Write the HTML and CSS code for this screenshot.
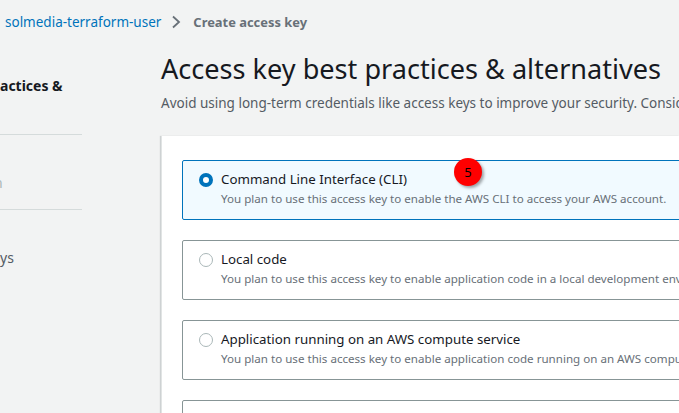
FILE: index.html
```html
<!DOCTYPE html>
<html>
<head>
<meta charset="utf-8">
<link rel="stylesheet" href="styles.css">
</head>
<body>
<div class="page">
  <nav class="crumbs">
    <a class="crumb-link">solmedia-terraform-user</a>
    <svg class="chev" width="10" height="14" viewBox="0 0 10 14"><path d="M2 1.5 L8 7 L2 12.5" fill="none" stroke="#687078" stroke-width="1.8"/></svg>
    <span class="crumb-cur">Create access key</span>
  </nav>
  <div class="layout">
    <aside class="side">
      <div class="step step-active"><span class="clip">actices &amp;</span></div>
      <div class="step step-muted"><span class="clip-n">n</span></div>
      <div class="step step-last"><span class="clip">ys</span></div>
    </aside>
    <main class="main">
      <h1 class="title">Access key best practices &amp; alternatives</h1>
      <p class="sub">Avoid using long-term credentials like access keys to improve your security. Consider the following use cases and alternatives.</p>
      <section class="panel">
        <div class="tile tile-selected">
          <span class="radio radio-on"></span>
          <div class="tile-text">
            <div class="tile-title">Command Line Interface (CLI)</div>
            <div class="tile-desc">You plan to use this access key to enable the AWS CLI to access your AWS account.</div>
          </div>
          <span class="badge">5</span>
        </div>
        <div class="tile">
          <span class="radio"></span>
          <div class="tile-text">
            <div class="tile-title">Local code</div>
            <div class="tile-desc">You plan to use this access key to enable application code in a local development environment to access your AWS account.</div>
          </div>
        </div>
        <div class="tile">
          <span class="radio"></span>
          <div class="tile-text">
            <div class="tile-title">Application running on an AWS compute service</div>
            <div class="tile-desc">You plan to use this access key to enable application code running on an AWS compute service like Amazon EC2 to access your AWS account.</div>
          </div>
        </div>
        <div class="tile">
          <span class="radio"></span>
          <div class="tile-text">
            <div class="tile-title">Third-party service</div>
            <div class="tile-desc">You plan to use this access key to enable access for a third-party application or service.</div>
          </div>
        </div>
      </section>
    </main>
  </div>
</div>
</body>
</html>
```

FILE: styles.css
```css
* { box-sizing: border-box; }
html, body { margin: 0; padding: 0; }
body {
  background: #f2f3f3;
  font-family: "Noto Sans", "Open Sans", sans-serif;
  color: #16191f;
  width: 679px;
  height: 413px;
  overflow: hidden;
}
.page { width: 679px; }
.crumbs {
  display: flex;
  align-items: center;
  height: 22px;
  margin-top: 11px;
  padding-left: 5px;
  font-size: 13.5px;
  white-space: nowrap;
}
.crumb-link { color: #0073bb; }
.chev { margin: 0 12px 0 10px; }
.crumb-cur { color: #687078; font-weight: 700; font-size: 12.9px; }
.layout {
  display: flex;
  align-items: flex-start;
}
.side {
  width: 82px;
  flex: none;
  margin-top: 43px;
  overflow: hidden;
  font-size: 14px;
  white-space: nowrap;
}
.step { overflow: hidden; }
.step-active {
  font-weight: 700;
  color: #16191f;
  height: 59px;
  border-bottom: 1px solid #d5dbdb;
}
.step-muted {
  color: #aab7b8;
  height: 75px;
  padding-top: 38px;
  border-bottom: 1px solid #d5dbdb;
}
.clip-n { display: inline-block; margin-left: -6px; }
.step-last {
  color: #545b64;
  padding-top: 38px;
}
.main {
  margin-left: 79px;
  flex: 1;
  min-width: 0;
  margin-top: 16px;
}
.title {
  margin: 0;
  font-size: 27.1px;
  font-weight: 400;
  line-height: 40px;
  white-space: nowrap;
  color: #16191f;
}
.sub {
  margin: 0;
  font-size: 13.5px;
  line-height: 20px;
  margin-top: 4px;
  color: #545b64;
  white-space: nowrap;
}
.panel {
  margin-top: 23px;
  background: #fff;
  border-left: 1px solid #e1e4e4;
  box-shadow: -1px 0 1px rgba(0,28,36,0.15);
  padding: 24px 0 0 20px;
  height: 300px;
  display: flex;
  flex-direction: column;
  gap: 20px;
}
.tile {
  position: relative;
  display: flex;
  align-items: flex-start;
  width: 560px;
  height: 60px;
  flex: none;
  border: 1px solid #879596;
  border-radius: 2px;
  padding: 9px 0 0 16px;
  white-space: nowrap;
}
.tile-selected {
  border-color: #0073bb;
  background: #f1faff;
}
.radio {
  width: 14px;
  height: 14px;
  border-radius: 50%;
  border: 1px solid #aab7b8;
  background: #fff;
  flex: none;
  margin-top: 3px;
  margin-right: 8px;
}
.radio-on {
  border: 4px solid #0073bb;
}
.tile-text { min-width: 0; }
.tile-title {
  font-size: 13.3px;
  line-height: 19px;
  color: #16191f;
}
.tile-desc {
  font-size: 11.6px;
  line-height: 18px;
  margin-top: 1px;
  color: #687078;
}
.badge {
  position: absolute;
  left: 271px;
  top: -3px;
  width: 28px;
  height: 28px;
  border-radius: 50%;
  background: #ff0000;
  color: #000;
  font-size: 13px;
  line-height: 28px;
  text-align: center;
  box-shadow: 2px 2px 3px rgba(0,0,0,0.35);
}
```
